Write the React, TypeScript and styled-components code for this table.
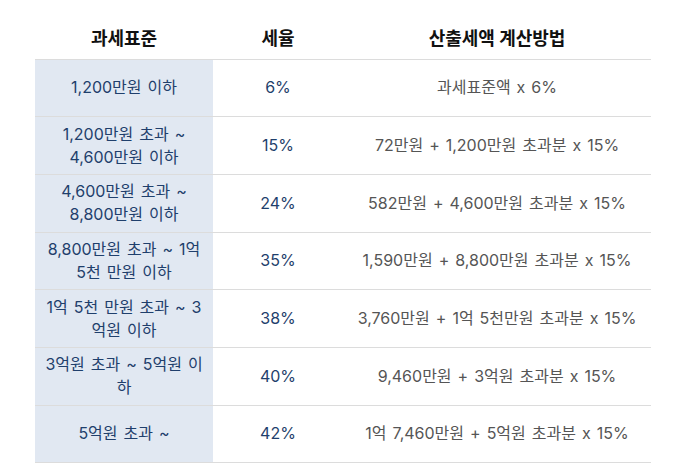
import React from "react";
import styled, { createGlobalStyle } from "styled-components";

const GlobalStyle = createGlobalStyle`
  html, body {
    margin: 0;
    padding: 0;
    background: #ffffff;
  }
  body {
    font-family: Inter, "Noto Sans CJK KR", sans-serif;
  }
`;

const colors = {
  line: "#dcdcdc",
  shade: "#e1e8f2",
  navy: "#1f3f6c",
  grey: "#555555",
  black: "#111111",
};

const rows = [
  { base: "1,200만원 이하", rate: "6%", calc: "과세표준액 x 6%" },
  { base: "1,200만원 초과 ~ 4,600만원 이하", rate: "15%", calc: "72만원 + 1,200만원 초과분 x 15%" },
  { base: "4,600만원 초과 ~ 8,800만원 이하", rate: "24%", calc: "582만원 + 4,600만원 초과분 x 15%" },
  { base: "8,800만원 초과 ~ 1억 5천 만원 이하", rate: "35%", calc: "1,590만원 + 8,800만원 초과분 x 15%" },
  { base: "1억 5천 만원 초과 ~ 3억원 이하", rate: "38%", calc: "3,760만원 + 1억 5천만원 초과분 x 15%" },
  { base: "3억원 초과 ~ 5억원 이하", rate: "40%", calc: "9,460만원 + 3억원 초과분 x 15%" },
  { base: "5억원 초과 ~", rate: "42%", calc: "1억 7,460만원 + 5억원 초과분 x 15%" },
];

//page
const Page = styled.div`
  padding: 0 34px 0 35px;
`;

const Table = styled.table`
  width: 616px;
  border-collapse: collapse;
  table-layout: fixed;
`;

//header
const HeadCell = styled.th`
  height: 59px;
  padding: 16px 0 0;
  font-size: 18px;
  font-weight: 700;
  color: ${colors.black};
  text-align: center;
  border-bottom: 1px solid ${colors.line};
  box-sizing: border-box;
`;

//body rows
const Row = styled.tr`
  height: 57.7px;
  border-bottom: 1px solid ${colors.line};
`;

const Cell = styled.td<{ $tone: "base" | "rate" | "calc" }>`
  padding: 0 9px;
  text-align: center;
  font-size: 16px;
  line-height: 23px;
  word-spacing: 1.5px;
  background: ${(p) => (p.$tone === "base" ? colors.shade : "transparent")};
  color: ${(p) => (p.$tone === "calc" ? colors.grey : colors.navy)};
`;

const App: React.FC = () => {
  return (
    <>
      <GlobalStyle />
      <Page>
        <Table>
          <colgroup>
            <col style={{ width: 178 }} />
            <col style={{ width: 130 }} />
            <col style={{ width: 308 }} />
          </colgroup>
          <thead>
            <tr>
              <HeadCell>과세표준</HeadCell>
              <HeadCell>세율</HeadCell>
              <HeadCell>산출세액 계산방법</HeadCell>
            </tr>
          </thead>
          <tbody>
            {rows.map((r) => (
              <Row key={r.rate}>
                <Cell $tone="base">{r.base}</Cell>
                <Cell $tone="rate">{r.rate}</Cell>
                <Cell $tone="calc">{r.calc}</Cell>
              </Row>
            ))}
          </tbody>
        </Table>
      </Page>
    </>
  );
};

export default App;
